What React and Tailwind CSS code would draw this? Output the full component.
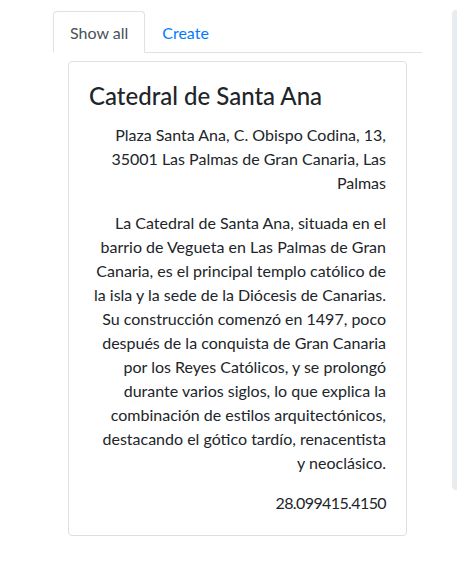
import React from 'react';

const addressLines = [
  'Plaza Santa Ana, C. Obispo Codina, 13,',
  '35001 Las Palmas de Gran Canaria, Las',
  'Palmas',
];

const descriptionLines = [
  'La Catedral de Santa Ana, situada en el',
  'barrio de Vegueta en Las Palmas de Gran',
  'Canaria, es el principal templo católico de',
  'la isla y la sede de la Diócesis de Canarias.',
  'Su construcción comenzó en 1497, poco',
  'después de la conquista de Gran Canaria',
  'por los Reyes Católicos, y se prolongó',
  'durante varios siglos, lo que explica la',
  'combinación de estilos arquitectónicos,',
  'destacando el gótico tardío, renacentista',
  'y neoclásico.',
];

const App = () => {
  return (
    <div
      className="min-h-[580px] bg-white text-[#212529] text-base leading-6 flex"
      style={{ fontFamily: '"Segoe UI", Lato, "Liberation Sans", sans-serif' }}
    >
      <div className="ml-[53px] mt-[11px] w-[369px] shrink-0">
        <ul className="flex border-b border-[#dee2e6]">
          <li className="-mb-px">
            <div className="px-4 pt-[9px] pb-[7px] border border-[#dee2e6] border-b-white rounded-t bg-white text-[#495057]">
              Show all
            </div>
          </li>
          <li className="-mb-px">
            <div className="px-4 pt-[9px] pb-[7px] border border-transparent text-[#007bff]">Create</div>
          </li>
        </ul>

        <div className="px-[15px] pt-2">
          <div className="border border-[#dfdfdf] rounded p-5">
            <h4 className="text-2xl leading-[1.2] font-medium mb-3">Catedral de Santa Ana</h4>
            <p className="text-right mb-4">
              {addressLines.map((line) => (
                <span key={line} className="block whitespace-nowrap">{line}</span>
              ))}
            </p>
            <p className="text-right mb-4">
              {descriptionLines.map((line) => (
                <span key={line} className="block whitespace-nowrap">{line}</span>
              ))}
            </p>
            <p className="text-right tracking-[-0.6px]">28.099415.4150</p>
          </div>
        </div>
      </div>

      <div className="ml-[30px] mt-[10px] h-[480px] flex-1 bg-[#e9ecef] rounded-l" />
    </div>
  );
};

export default App;
